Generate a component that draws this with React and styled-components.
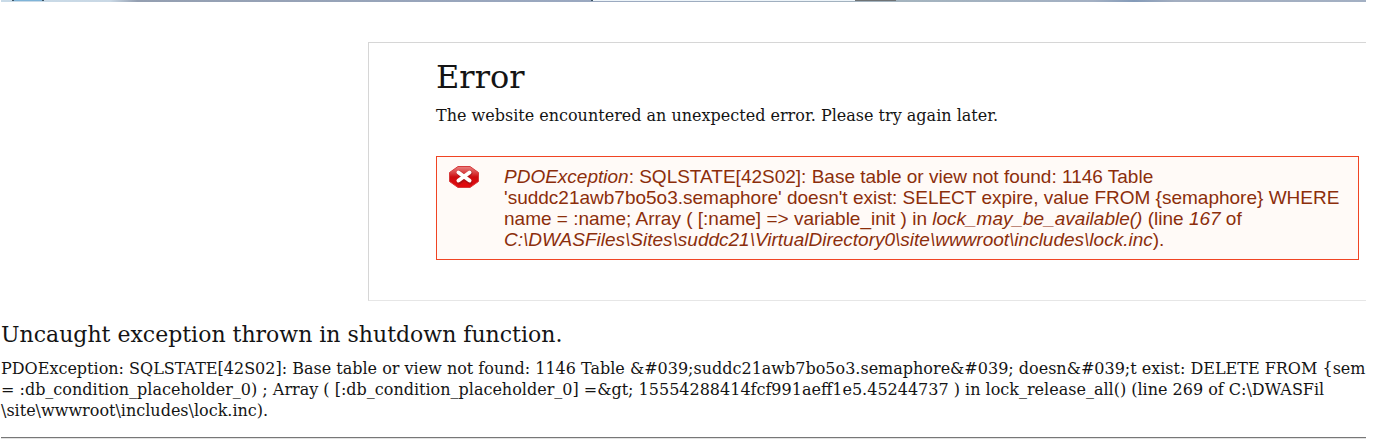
import React from "react";
import styled, { createGlobalStyle } from "styled-components";

const GlobalStyle = createGlobalStyle`
  body {
    margin: 0;
    background: #fff;
    color: #141414;
    font-family: "DejaVu Serif", Georgia, serif;
    font-size: 16px;
    line-height: 21px;
  }
`;

const Page = styled.div`
  margin: 0 10px 0 1px;
`;

const Banner = styled.svg`
  display: block;
  width: 100%;
  height: 2px;
`;

const Panel = styled.main`
  margin: 40px 0 0 367px;
  padding: 16px 7px 40px 67px;
  border: 1px solid #d6d6d6;
  border-right: 0;
  border-bottom-color: #e6e6e6;
`;

const Title = styled.h1`
  margin: 0;
  font-size: 32px;
  line-height: 36px;
  font-weight: 400;
`;

const Intro = styled.p`
  margin: 10px 0 30px;
`;

const Alert = styled.div`
  display: flex;
  gap: 25px;
  padding: 9px 12px;
  border: 1px solid #f04423;
  background: #fffaf7;
  color: #8c2e0b;
  font-family: "Liberation Sans", Arial, sans-serif;
  font-size: 19px;
`;

const AlertText = styled.p`
  margin: 0;
  white-space: nowrap;
`;

const StopIcon = styled.svg`
  flex: none;
  width: 30px;
  height: 22px;
`;

const Report = styled.section`
  padding-top: 20px;
  white-space: nowrap;
`;

const ReportTitle = styled.h2`
  margin: 0 0 9px;
  font-size: 22px;
  line-height: 28px;
  font-weight: 400;
`;

const ReportText = styled.p`
  margin: 0;
`;

const Rule = styled.hr`
  margin: 16px 0 0;
  border: 0;
  border-top: 1px solid #777;
  border-bottom: 1px solid #e2e2e2;
`;

export default function App() {
  return (
    <>
      <GlobalStyle />
      <Page>
        <Banner viewBox="0 0 1365 2" preserveAspectRatio="none" aria-hidden="true">
          <defs>
            <linearGradient id="sky">
              <stop offset="0" stopColor="#c9dbe8" />
              <stop offset="0.08" stopColor="#c9d8e5" />
              <stop offset="0.1" stopColor="#949fb1" />
              <stop offset="0.42" stopColor="#9aa8c0" />
              <stop offset="0.66" stopColor="#a4b4bf" />
              <stop offset="0.8" stopColor="#a3b0c3" />
              <stop offset="0.83" stopColor="#849bb9" />
              <stop offset="0.86" stopColor="#a3aec0" />
              <stop offset="1" stopColor="#a3b0c3" />
            </linearGradient>
          </defs>
          <path fill="url(#sky)" d="M0 0H1365V2H0z" />
          <path fill="#7fb4d8" d="M13 0H41V1H13z" />
          <path fill="#3d5566" d="M11 0H13V1H11zM41 0H43V1H41zM590 0H592V1H590z" />
          <path fill="#edf4f9" d="M592 0H854V1H592z" />
          <path fill="#6f7375" d="M854 0H895V1H854z" />
        </Banner>

        <Panel>
          <Title>Error</Title>
          <Intro>The website encountered an unexpected error. Please try again later.</Intro>
          <Alert role="alert">
            <StopIcon viewBox="0 0 30 22" aria-hidden="true">
              <defs>
                <linearGradient id="stop" x1="0" y1="0" x2="0" y2="1">
                  <stop offset="0" stopColor="#e8807f" />
                  <stop offset="0.35" stopColor="#d83436" />
                  <stop offset="0.5" stopColor="#cc0c10" />
                  <stop offset="1" stopColor="#e60a0e" />
                </linearGradient>
              </defs>
              <path fill="url(#stop)" stroke="#d63a3c" d="M9 .5H21L29.500 6.500V15.500L21 21.500H9L.5 15.500V6.500z" />
              <path stroke="#8e1215" strokeOpacity=".5" strokeWidth="5" strokeLinecap="round" d="M10 7L21 16M21 7L10 16" />
              <path stroke="#fff" strokeWidth="4" strokeLinecap="round" d="M9.500 6.500L20.500 14.500M20.500 6.500L9.500 14.500" />
            </StopIcon>
            <AlertText>
              <em>PDOException</em>: SQLSTATE[42S02]: Base table or view not found: 1146 Table
              <br />
              'suddc21awb7bo5o3.semaphore' doesn't exist: SELECT expire, value FROM {"{semaphore}"} WHERE
              <br />
              name = :name; Array ( [:name] =&gt; variable_init ) in <em>lock_may_be_available()</em> (line <em>167</em> of
              <br />
              <em>C:\DWASFiles\Sites\suddc21\VirtualDirectory0\site\wwwroot\includes\lock.inc</em>).
            </AlertText>
          </Alert>
        </Panel>

        <Report>
          <ReportTitle>Uncaught exception thrown in shutdown function.</ReportTitle>
          <ReportText>
            {"PDOException: SQLSTATE[42S02]: Base table or view not found: 1146 Table &#039;suddc21awb7bo5o3.semaphore&#039; doesn&#039;t exist: DELETE FROM {sem"}
            <br />
            {"= :db_condition_placeholder_0) ; Array ( [:db_condition_placeholder_0] =&gt; 15554288414fcf991aeff1e5.45244737 ) in lock_release_all() (line 269 of C:\\DWASFil"}
            <br />
            {"\\site\\wwwroot\\includes\\lock.inc)."}
          </ReportText>
        </Report>
        <Rule />
      </Page>
    </>
  );
}
